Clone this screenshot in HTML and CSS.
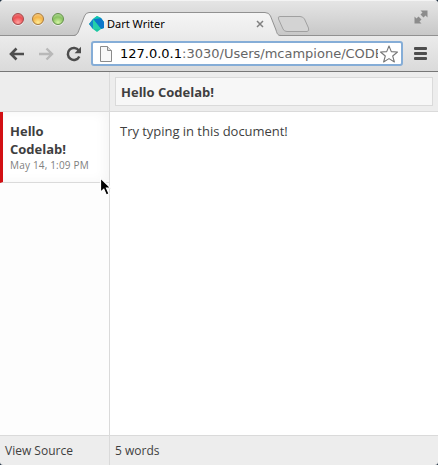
FILE: index.html
```html
<!DOCTYPE html>
<html lang="en">
<head>
<meta charset="utf-8">
<title>Dart Writer</title>
<link rel="stylesheet" href="styles.css">
</head>
<body>
<div class="window">
  <div class="titlebar">
    <div class="lights"><i class="light red"></i><i class="light yellow"></i><i class="light green"></i></div>
    <div class="tab">
      <svg class="tab-shape" width="212" height="25" viewBox="0 0 212 25">
        <defs><linearGradient id="tabfill" x1="0" y1="0" x2="0" y2="1"><stop offset="0" stop-color="#f5f5f5"/><stop offset="1" stop-color="#ebebeb"/></linearGradient></defs>
        <path d="M0 25C3 24.500 4 22 5 19L10.500 5Q12 1.500 15 1.500H191Q195 1.500 196.500 5L202 19C203 23 204 24.500 207 25Z" fill="url(#tabfill)"/>
        <path d="M0 24.500C3 24 4 22 5 19L10.500 5Q12 1.500 15 1.500H191Q195 1.500 196.500 5L202 19C203 23 204 24.500 207 24.500" fill="none" stroke="#919191"/>
      </svg>
      <svg class="dart" width="16" height="16" viewBox="0 0 16 16">
        <path d="M4 3L8 0L12 2L15 6V12L12 13L8 16L4 13L0 8Z" fill="#1bc7a2"/>
        <path d="M4 3L12 2L15 6V12L12 13Z" fill="#0c78cb"/>
        <path d="M4 3L0 8L4 13Z" fill="#1687c9"/>
        <path d="M4 3V13H12Z" fill="#25cfa9"/>
        <path d="M4 3L8 0L12 2Z" fill="#12c5b4"/>
      </svg>
      <span class="tab-title">Dart Writer</span>
      <svg class="close" width="8" height="8" viewBox="0 0 8 8"><path d="M1 1L7 7M7 1L1 7" stroke="#808080" stroke-width="1.500"/></svg>
    </div>
    <svg class="new-tab" width="34" height="18" viewBox="0 0 34 18"><path d="M3 1.500H23Q26 1.500 27.500 4L31.500 13Q32.500 16.500 30 16.500H10Q7 16.500 6 14L1.500 4Q.5 1.500 3 1.500Z" fill="#d3d3d3" stroke="#a0a0a0"/></svg>
    <svg class="expand" width="14" height="14" viewBox="0 0 14 14"><path d="M6.500 .5H13.500V7.500L11.500 5.500L9.500 7.500L6.500 4.500L8.500 2.500ZM.5 6.500L2.500 8.500L4.500 6.500L7.500 9.500L5.500 11.500L7.500 13.500H.5Z" fill="#8c8c8c"/></svg>
  </div>
  <div class="toolbar">
    <svg class="back" width="16" height="14" viewBox="0 0 16 14"><path d="M7.500 1.500L2 7L7.500 12.500M2 7H15" fill="none" stroke="#4d4d4d" stroke-width="2.600"/></svg>
    <svg class="forward" width="16" height="14" viewBox="0 0 16 14"><path d="M8.500 1.500L14 7L8.500 12.500M14 7H1" fill="none" stroke="#b8b8b8" stroke-width="2.400"/></svg>
    <svg class="reload" width="16" height="16" viewBox="0 0 16 16"><path d="M12.800 4.500A6 6 0 1 0 13.300 10.500" fill="none" stroke="#4d4d4d" stroke-width="2.500"/><path d="M15 .8V7.200H8.600Z" fill="#4d4d4d"/></svg>
    <div class="omnibox">
      <svg class="page" width="12" height="16" viewBox="0 0 12 16"><path d="M1 .5H7.500L11.500 4.500V15.500H.5V.5Z" fill="#f8f8f8" stroke="#8b8b8b"/><path d="M7.500 .5V4.500H11.500" fill="#ddd" stroke="#8b8b8b"/></svg>
      <div class="url"><b>127.0.0.1</b>:3030/Users/mcampione/CODELAB</div>
      <svg class="star" width="18" height="18" viewBox="1 0 18 18"><path d="M10 1L12.300 6.600L18.500 7L13.700 11L15.400 17L10 13.600L4.600 17L6.300 11L1.500 7L7.700 6.600Z" fill="#fff" stroke="#777" stroke-width="1.100" stroke-linejoin="round"/></svg>
    </div>
    <div class="menu"><i></i><i></i><i></i></div>
  </div>
  <div class="app">
    <div class="side-head"></div>
    <div class="doc-head"><div class="doc-title">Hello Codelab!</div></div>
    <div class="sidebar">
      <div class="doc-item"><div class="doc-name">Hello Codelab!</div><div class="doc-date">May 14, 1:09 PM</div></div>
    </div>
    <div class="editor">Try typing in this document!</div>
    <div class="side-foot">View Source</div>
    <div class="doc-foot">5 words</div>
  </div>
  <svg class="cursor" width="14" height="20" viewBox="0 0 14 20"><path d="M1.500 1V15.300L4.800 12.200L7.300 18L10 16.800L7.500 11.200H12Z" fill="#000" stroke="#fff" stroke-width="1.200"/></svg>
</div>
</body>
</html>
```

FILE: styles.css
```css
* { box-sizing: border-box; }
body { margin: 0; background: #234; }
svg { display: block; flex: none; }
.window {
  position: relative;
  display: flex;
  flex-direction: column;
  width: 438px;
  height: 465px;
  overflow: hidden;
  border-radius: 4px 4px 3px 3px;
  background: #ededed;
  color: #3f3f3f;
  font: 13px/18px "Open Sans", sans-serif;
}
.titlebar {
  display: flex;
  height: 36px;
  flex: none;
  border-top: 1px solid #f4f4f4;
  border-bottom: 1px solid #919191;
  background: linear-gradient(#e5e5e5, #c8c8c8);
}
.lights { display: flex; gap: 8px; padding: 12px 0 0 12px; width: 74px; flex: none; }
.light { width: 12px; height: 12px; border-radius: 50%; border: 1px solid; box-shadow: 0 1px 0 #eee; }
.red { background: radial-gradient(circle at 50% 85%, #ffa3a0, #ec5054 55%, #e98b8b); border-color: #a5484a; }
.yellow { background: radial-gradient(circle at 50% 85%, #ffec96, #f3b348 55%, #f5d49a); border-color: #a97a3b; }
.green { background: radial-gradient(circle at 50% 85%, #d5f5a4, #89c262 55%, #bcdfa4); border-color: #64904b; }
.tab { position: relative; display: flex; align-items: center; width: 202px; height: 25px; margin-top: 10px; padding: 0 12px 0 15px; flex: none; }
.tab-shape { position: absolute; left: 0; top: 0; }
.dart, .tab-title, .close { position: relative; }
.tab-title { margin-left: 2px; flex: 1; color: #000; font: 11px/14px "Noto Sans", sans-serif; white-space: nowrap; }
.new-tab { margin: 14px 0 0 1px; }
.expand { margin: 9px 10px 0 auto; }
.toolbar {
  display: flex;
  align-items: center;
  height: 36px;
  flex: none;
  padding: 0 11px 0 9px;
  border-bottom: 1px solid #777;
  background: linear-gradient(#ebebeb, #dadada);
}
.forward { margin-left: 13px; }
.reload { margin-left: 12px; }
.omnibox {
  display: flex;
  align-items: center;
  width: 312px;
  height: 25px;
  margin-left: 9px;
  padding: 0 3px 0 7px;
  border: 2px solid #85add7;
  border-radius: 3px;
  background: #fff;
  flex: none;
}
.url { flex: none; width: 258px; margin: 0 2px 0 8px; overflow: hidden; color: #666; font: 13px/19px "DejaVu Sans", sans-serif; white-space: nowrap; }
.url b { color: #000; font-weight: 400; }
.menu { display: flex; flex-direction: column; gap: 2px; width: 13px; margin-left: auto; }
.menu i { height: 3px; border-radius: 1px; background: #4d4d4d; }
.app { display: grid; flex: 1; grid-template: 40px 1fr 30px / 110px 1fr; }
.side-head, .sidebar, .side-foot { border-right: 1px solid #dadada; }
.side-head, .doc-head { border-bottom: 1px solid #dadada; }
.doc-head { padding: 5px; }
.doc-title { height: 29px; padding: 5px; border: 1px solid #dadada; background: #f7f7f7; font-weight: 700; }
.sidebar { background: #fdfdfd; }
.doc-item { height: 71px; padding: 10px 0 0 7px; border-left: 3px solid #d20f13; border-bottom: 1px solid #dadada; background: #fff; box-shadow: inset -4px 0 12px #f5f5f5; }
.doc-name { width: 80px; font-weight: 700; }
.doc-date { color: #808080; font-size: 10px; line-height: 15px; letter-spacing: .18px; white-space: nowrap; }
.editor { padding: 10px; background: #fff; letter-spacing: -.03px; }
.side-foot, .doc-foot { padding: 6px 5px; border-top: 1px solid #dadada; font-size: 12px; }
.cursor { position: absolute; left: 99px; top: 177px; }
```
